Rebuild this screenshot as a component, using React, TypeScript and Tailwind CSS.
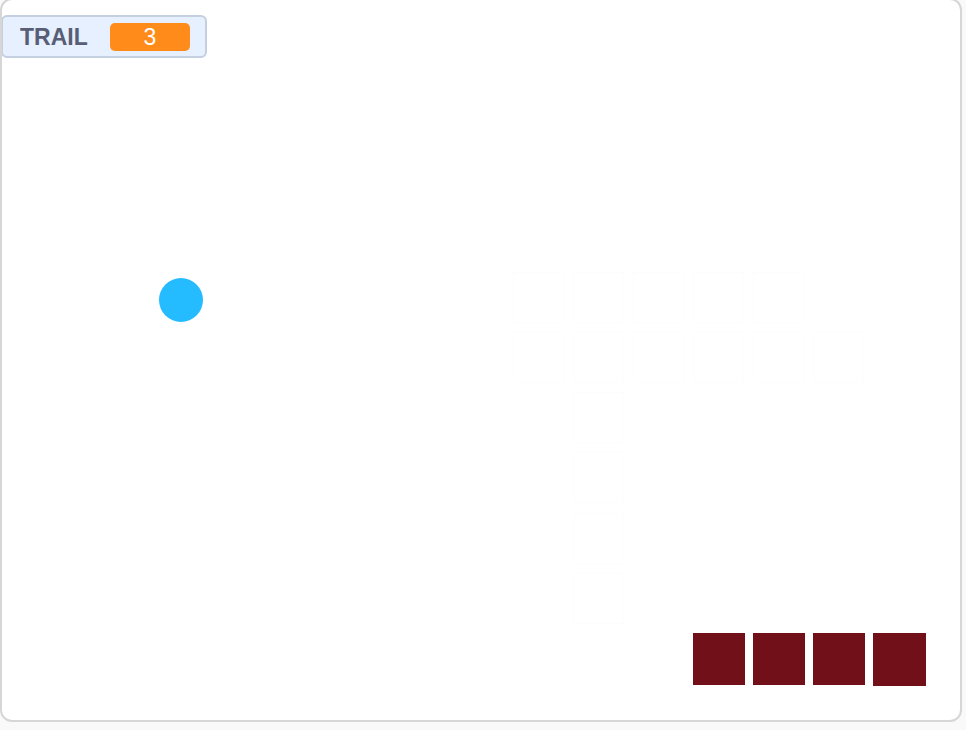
import React from "react";

const ghosts: [number, number][] = [
  [513, 272], [573, 272], [633, 272], [693, 272], [753, 272],
  [513, 332], [573, 332], [633, 332], [693, 332], [753, 332], [813, 332],
  [573, 392], [573, 452], [573, 513], [573, 573],
];

const reds = [693, 753, 813, 873];

export default function App() {
  return (
    <div className="w-[966px] h-[730px] bg-[#f9f9f9] overflow-hidden" style={{ fontFamily: '"Liberation Sans", Arial, sans-serif' }}>
      <div className="relative -mt-[2px] w-[962px] h-[724px] bg-white border-2 border-[#d6d6d6] rounded-[12px] overflow-hidden">
        {ghosts.map(([x, y], i) => (
          <div
            key={i}
            className="absolute w-[51px] h-[51px] bg-white border border-[#fdfdfd]"
            style={{ left: x - 2, top: y }}
          />
        ))}
        <div className="absolute left-[157px] top-[278px] w-[44px] h-[44px] rounded-full bg-[#25bcff]" />
        {reds.map((x, i) => (
          <div
            key={i}
            className={`absolute bg-[#72101a] ${i === 3 ? "w-[53px] h-[53px]" : "w-[52px] h-[52px]"}`}
            style={{ left: x - 2, top: 633 }}
          />
        ))}
        <div className="absolute -left-[1px] top-[15px] w-[206px] h-[43px] flex items-center bg-[#e6f0ff] border-2 border-[#c4cfdf] rounded-[6px] pl-[17px]">
          <span className="text-[23px] font-bold text-[#575e75] leading-none w-[90px] pt-[1px]">TRAIL</span>
          <div className="w-[80px] h-[28px] rounded-[5px] bg-[#ff8c1a] flex items-center justify-center text-white text-[23px] leading-none pt-[1px]">
            3
          </div>
        </div>
      </div>
    </div>
  );
}
